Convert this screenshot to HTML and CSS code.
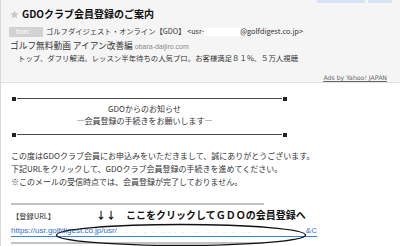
FILE: index.html
```html
<!DOCTYPE html>
<html lang="ja">
<head>
<meta charset="utf-8">
<title>GDOクラブ会員登録のご案内</title>
<link rel="stylesheet" href="styles.css">
</head>
<body>
<div class="page">
  <header class="head">
    <div class="tabs"><span class="tab tab-a"></span><span class="tab tab-b"></span></div>
    <div class="title">
      <svg class="star" viewBox="0 0 10 10" width="9" height="9"><polygon points="5,0.3 6.3,3.6 9.8,3.8 7.1,6 8,9.6 5,7.6 2,9.6 2.9,6 0.2,3.8 3.7,3.6" fill="#c8c8c8"/></svg>
      <h1>GDOクラブ会員登録のご案内</h1>
    </div>
    <div class="from">
      <span class="pill">from :</span>
      <span class="sender">ゴルフダイジェスト・オンライン【GDO】 &lt;usr-<span class="mask"></span>@golfdigest.co.jp&gt;</span>
    </div>
    <div class="ad-title">ゴルフ無料動画 アイアン改善編 <span class="ad-domain">obara-daijiro.com</span></div>
    <div class="ad-desc">トップ、ダフリ解消。レッスン半年待ちの人気プロ。お客様満足８１%、５万人視聴</div>
    <div class="ads"><span class="ads-link">Ads by Yahoo! JAPAN</span></div>
  </header>
  <main class="mail">
    <div class="sep"><span class="sq"></span><span class="rule"></span><span class="sq"></span></div>
    <div class="notice">
      <div>GDOからのお知らせ</div>
      <div>―会員登録の手続きをお願いします―</div>
    </div>
    <div class="sep"><span class="sq"></span><span class="rule"></span><span class="sq"></span></div>
    <div class="para">
      <div>この度はGDOクラブ会員にお申込みをいただきまして、誠にありがとうございます。</div>
      <div>下記URLをクリックして、GDOクラブ会員登録の手続きを進めてください。</div>
      <div>※このメールの受信時点では、会員登録が完了しておりません。</div>
    </div>
    <div class="hr"></div>
    <div class="urlblock">
      <div class="url-head">
        <span class="url-label">【登録URL】</span>
        <span class="callout">↓↓　ここをクリックしてＧＤＯの会員登録へ</span>
      </div>
      <div class="url-line"><span class="url">https://usr.golfdigest.co.jp/usr/<span class="url-mask">.  .  .   ,  .  .. . .  .   ..   .  .  .  .   . .</span>&amp;C</span></div>
      <svg class="circle" width="252" height="24" viewBox="0 0 252 24"><ellipse cx="126" cy="12" rx="124.5" ry="10.5" fill="none" stroke="#111" stroke-width="1.4"/></svg>
    </div>
    <div class="hr hr-bottom"></div>
  </main>
</div>
</body>
</html>
```
FILE: styles.css
```css
html, body {
  margin: 0;
  padding: 0;
  background: #ffffff;
}
body {
  width: 400px;
  height: 246px;
  overflow: hidden;
  font-family: "Noto Sans CJK JP", "Noto Sans", sans-serif;
  color: #333;
}
.page {
  border-left: 1px solid #d9d9d9;
  height: 246px;
  box-sizing: border-box;
}
.head {
  background: #f5f5f5;
  height: 83px;
  box-sizing: border-box;
  border-bottom: 1px solid #e2e2e2;
  padding-left: 8px;
}
.tabs {
  display: flex;
  justify-content: flex-end;
  gap: 3px;
  height: 3px;
  padding-right: 8px;
}
.tab {
  display: block;
  height: 3px;
  background: #d5e3f5;
}
.tab-a { width: 48px; }
.tab-b { width: 24px; }
.title {
  display: flex;
  align-items: center;
  height: 12px;
  margin-top: 5px;
}
.star {
  display: block;
  margin-left: 1px;
  margin-right: 3px;
}
.title h1 {
  margin: 0;
  font-size: 10px;
  line-height: 12px;
  font-weight: bold;
  color: #111;
}
.from {
  display: flex;
  align-items: center;
  height: 11px;
  margin-top: 6px;
  font-size: 7.3px;
  line-height: 11px;
}
.pill {
  display: block;
  width: 34px;
  height: 10px;
  line-height: 10px;
  background: #d2d2d2;
  color: #fff;
  font-family: "Liberation Sans", sans-serif;
  font-size: 6.5px;
  padding-left: 7px;
  box-sizing: border-box;
  margin-right: 3px;
}
.sender {
  color: #333;
  white-space: nowrap;
}
.mask {
  display: inline-block;
  width: 36px;
  height: 8px;
  background: #fff;
  vertical-align: middle;
}
.ad-title {
  margin-top: 3px;
  height: 11px;
  line-height: 11px;
  font-size: 8.7px;
  padding-left: 1px;
  white-space: nowrap;
}
.ad-domain {
  font-family: "Liberation Sans", sans-serif;
  font-size: 7px;
  color: #8a8a8a;
}
.ad-desc {
  height: 11px;
  line-height: 11px;
  margin-top: 1px;
  padding-left: 9px;
  font-size: 7.4px;
  white-space: nowrap;
}
.ads {
  margin-top: 5px;
  height: 10px;
  line-height: 10px;
  text-align: right;
  padding-right: 13px;
}
.ads-link {
  font-family: "DejaVu Sans", sans-serif;
  font-size: 6.2px;
  color: #666;
  text-decoration: underline;
}
.mail {
  padding: 13px 0 0 10px;
  font-size: 8px;
  color: #333;
}
.sep {
  display: flex;
  align-items: center;
  width: 275px;
  height: 5px;
  margin-left: 1px;
}
.sq {
  display: block;
  width: 4px;
  height: 4px;
  background: #222;
}
.rule {
  display: block;
  flex: 1;
  height: 1px;
  background: #4a4a4a;
  margin: 0 1px;
}
.notice {
  width: 275px;
  margin: 2px 0 5px;
  text-align: center;
  line-height: 12px;
  box-sizing: border-box;
  padding-right: 8px;
}
.para {
  margin-top: 12px;
  line-height: 13px;
  white-space: nowrap;
}
.hr {
  width: 253px;
  height: 2px;
  background: #c2c2c2;
  margin-top: 15px;
}
.urlblock {
  position: relative;
}
.url-head {
  display: flex;
  align-items: flex-end;
  margin-top: 3px;
  height: 14px;
}
.url-label {
  width: 84px;
  font-size: 7.3px;
  line-height: 11px;
  padding-left: 1px;
}
.callout {
  font-size: 10px;
  line-height: 14px;
  font-weight: bold;
  color: #111;
  white-space: nowrap;
}
.url-line {
  margin-top: 2px;
  height: 12px;
}
.url {
  display: inline-block;
  font-family: "Liberation Sans", sans-serif;
  font-size: 8px;
  line-height: 11px;
  color: #2f6fd0;
  border-bottom: 1px solid #3d7fe0;
  white-space: pre;
}
.url-mask {
  display: inline-block;
  width: 189px;
  color: #b5cdef;
  letter-spacing: 0.5px;
  overflow: hidden;
  vertical-align: bottom;
}
.circle {
  position: absolute;
  left: 44px;
  top: 15px;
}
.hr-bottom {
  margin-top: 6px;
}
```
